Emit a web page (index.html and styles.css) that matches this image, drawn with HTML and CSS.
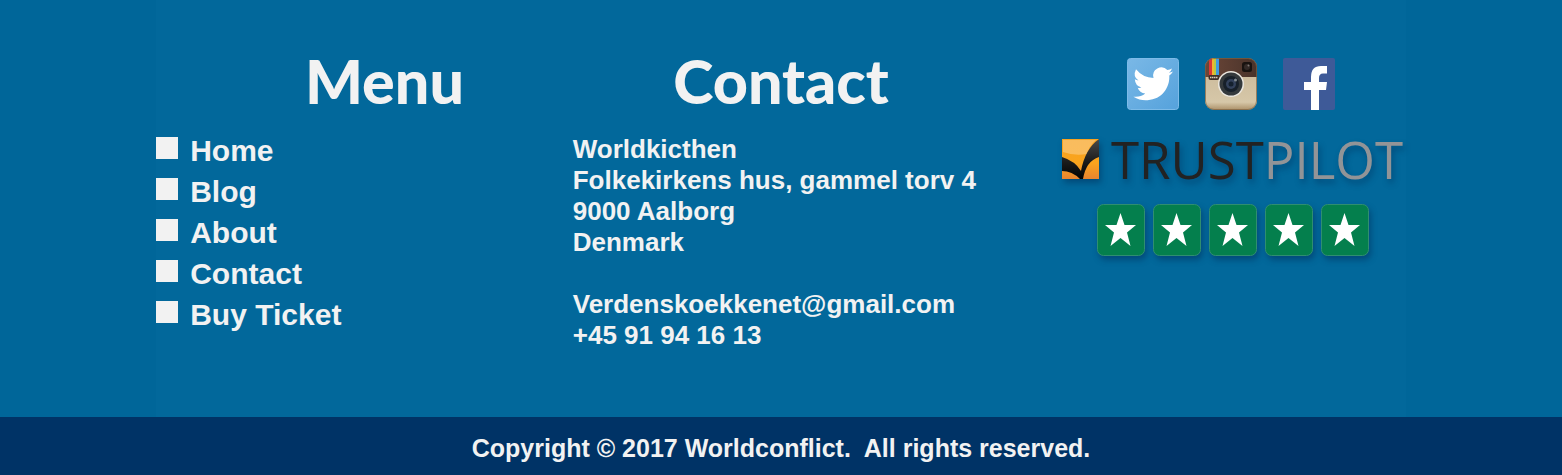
FILE: index.html
```html
<!DOCTYPE html>
<html lang="en">
<head>
<meta charset="utf-8">
<title>Worldconflict</title>
<link rel="stylesheet" href="styles.css">
</head>
<body>
<footer class="footer">
  <div class="columns">
    <nav class="menu">
      <h2 class="heading menu-heading">Menu</h2>
      <ul class="menu-list">
        <li><a href="#home">Home</a></li>
        <li><a href="#blog">Blog</a></li>
        <li><a href="#about">About</a></li>
        <li><a href="#contact">Contact</a></li>
        <li><a href="#ticket">Buy Ticket</a></li>
      </ul>
    </nav>
    <section class="contact">
      <h2 class="heading">Contact</h2>
      <address class="address">
        <p>Worldkicthen<br>Folkekirkens hus, gammel torv 4<br>9000 Aalborg<br>Denmark</p>
        <p><a href="mailto:Verdenskoekkenet@gmail.com">Verdenskoekkenet@gmail.com</a><br>+45 91 94 16 13</p>
      </address>
    </section>
    <section class="social">
      <div class="social-links">
        <a href="#twitter" aria-label="Twitter">
          <svg class="social-icon" viewBox="0 0 52 52">
            <defs><linearGradient id="sky" x1="0" y1="0" x2="1" y2="1"><stop offset="0" stop-color="#7ab8e6"/><stop offset="1" stop-color="#55a2dc"/></linearGradient></defs>
            <rect x=".5" y=".5" width="51" height="51" rx="3" fill="url(#sky)" stroke="#7dbbe8"/>
            <path fill="#fff" d="M46 13.600q-2 .9-4.100 1.200q2.300-1.700 3.100-4.400q-2.200 1.300-4.600 1.700A8.200 8.200 0 0 0 26.500 20Q15.800 19.600 9 11.200Q5.400 18.500 11.500 22.400q-2 0-3.700-1.100q.4 6.500 6.600 8.300q-1.800.5-3.700.1q1.800 5.200 7.600 5.800Q13.400 39.500 6.400 38.700Q13.300 42.900 20.700 42.200C35 41.500 43 29.500 42.300 17.600Q44.500 16.100 46 13.600z"/>
          </svg>
        </a>
        <a href="#instagram" aria-label="Instagram">
          <svg class="social-icon" viewBox="0 0 52 52">
            <defs>
              <clipPath id="camera"><rect width="52" height="52" rx="9"/></clipPath>
              <linearGradient id="leather" x1="0" y1="0" x2="1" y2="0"><stop offset="0" stop-color="#6b4638"/><stop offset="1" stop-color="#49332a"/></linearGradient>
              <linearGradient id="cream" x1="0" y1="0" x2="0" y2="1"><stop offset="0" stop-color="#c8b697"/><stop offset=".85" stop-color="#d6c7a8"/><stop offset="1" stop-color="#ab9068"/></linearGradient>
            </defs>
            <g clip-path="url(#camera)">
              <rect width="52" height="52" fill="url(#cream)"/>
              <rect width="52" height="19" fill="url(#leather)"/>
              <path fill="#d93935" d="M4 0h3v17H4z"/><path fill="#f1b42f" d="M7 0h2v17H7z"/><path fill="#bac93f" d="M9 0h2v17H9z"/><path fill="#3f9be0" d="M11 0h3v17h-3z"/>
              <rect x=".5" y=".5" width="51" height="51" rx="8.500" fill="none" stroke="#7d6140" opacity=".7"/>
            </g>
            <rect x="37" y="4" width="10" height="10" rx="2.500" fill="#191310"/><circle cx="42" cy="9" r="3" fill="#332a27"/><circle cx="43.500" cy="7.500" r="1" fill="#807671"/>
            <rect x="3.500" y="17" width="11" height="5" rx="2" fill="#3d2f29"/><path d="M5 19.500h8" stroke="#d8cdbb" stroke-width="1.500" stroke-dasharray="1.500 .5"/>
            <circle cx="26" cy="26" r="13" fill="#eae6de"/><circle cx="26" cy="26" r="11.500" fill="#34393c"/><circle cx="26" cy="26" r="8" fill="#17202a"/><circle cx="26" cy="26" r="5" fill="#33415b"/><circle cx="26" cy="26" r="2.500" fill="#14202e"/><circle cx="30.500" cy="22" r="1.500" fill="#7f8890"/>
          </svg>
        </a>
        <a href="#facebook" aria-label="Facebook">
          <svg class="social-icon" viewBox="0 0 52 52">
            <rect width="52" height="52" rx="2" fill="#3e5a98"/>
            <path fill="#fff" d="M28 52V32h-7v-8h7v-5q0-11 10-11h6v7.500h-4q-4 0-4 4.500v4h8l-1 8h-7v20z"/>
          </svg>
        </a>
      </div>
      <a class="trustpilot" href="#trustpilot" aria-label="Trustpilot">
        <svg class="trust-mark" viewBox="0 0 37 40">
          <defs>
            <linearGradient id="amber" x1="0" y1="0" x2="0" y2="1"><stop offset="0" stop-color="#f7a321"/><stop offset=".6" stop-color="#faa41d"/><stop offset="1" stop-color="#e88430"/></linearGradient>
            <linearGradient id="check" x1="0" y1="0" x2="0" y2="1"><stop offset="0" stop-color="#494a4a"/><stop offset=".6" stop-color="#191919"/><stop offset="1" stop-color="#030303"/></linearGradient>
          </defs>
          <rect width="37" height="40" fill="url(#amber)"/>
          <path fill="#fff" opacity=".28" d="M1 1h33Q27 7 25 15Q12 17 1 13z"/>
          <path fill="url(#check)" d="M0 18Q13 22 19 32Q23 10 37 0V18Q24 22 21 40H18Q10 32 0 32z"/>
        </svg>
        <span class="trust-word">TRUST<span class="trust-light">PILOT</span></span>
      </a>
      <svg class="stars" viewBox="0 0 272 52" role="img" aria-label="5 stars">
        <defs>
          <g id="star">
            <rect x=".5" y=".5" width="47" height="51" rx="6" fill="#047f4d" stroke="#2f8e70"/>
            <path fill="#fff" d="M23.500 9L27.500 21H39L30 28.500L33.500 42L23.500 34L13.500 42L17 28.500L8 21H19.500z"/>
          </g>
        </defs>
        <use href="#star"/><use href="#star" x="56"/><use href="#star" x="112"/><use href="#star" x="168"/><use href="#star" x="224"/>
      </svg>
    </section>
  </div>
  <p class="copyright">Copyright © 2017 Worldconflict.&nbsp; All rights reserved.</p>
</footer>
</body>
</html>
```
FILE: styles.css
```css
* {
  box-sizing: border-box;
}

body {
  margin: 0;
  font-family: "Liberation Sans", Arial, sans-serif;
  font-weight: bold;
  color: #f2f2f2;
  background: #003366;
}

a {
  color: inherit;
  text-decoration: none;
}

.footer {
  background: #006699;
}

.columns {
  display: grid;
  grid-template-columns: repeat(3, minmax(0, 1fr));
  width: 80%;
  margin: 0 auto;
  padding: 43px 0 66px;
  background: #02689b;
}

.heading {
  margin: 0 0 15px;
  font-family: Lato, sans-serif;
  font-size: 61px;
  font-weight: 900;
  line-height: 76px;
  text-align: center;
}

.menu-heading {
  padding-left: 40px;
  margin-bottom: 11px;
}

.menu-list {
  margin: 0;
  padding: 0;
  list-style: none;
  font-size: 30px;
  line-height: 41px;
}

.menu-list li {
  display: flex;
  gap: 12px;
}

.menu-list li::before {
  content: "";
  width: 22px;
  height: 22px;
  margin-top: 7px;
  background: #f2f2f2;
}

.address {
  font-size: 26px;
  font-style: normal;
  line-height: 31px;
  white-space: nowrap;
}

.address p {
  margin: 0 0 31px;
}

.address p:last-child {
  margin-bottom: 0;
}

.social {
  display: flex;
  flex-direction: column;
  align-items: center;
  padding: 15px 0 0 70px;
}

.social-links {
  display: flex;
  gap: 26px;
  padding-right: 3px;
}

.social-icon {
  display: block;
  width: 52px;
  height: 52px;
}

.trustpilot {
  display: flex;
  align-items: center;
  gap: 12px;
  margin: 20px 0 16px;
  filter: drop-shadow(2px 4px 3px rgba(0, 20, 60, 0.35));
}

.trust-mark {
  width: 37px;
  height: 40px;
}

.trust-word {
  font-family: "Open Sans", sans-serif;
  font-size: 51px;
  font-weight: 500;
  line-height: 58px;
  color: #222222;
}

.trust-light {
  color: #929497;
}

.stars {
  width: 272px;
  height: 52px;
  overflow: visible;
  filter: drop-shadow(2px 4px 3px rgba(0, 20, 60, 0.35));
}

.copyright {
  margin: 0;
  padding: 17px 0 12px;
  font-size: 25px;
  line-height: 29px;
  text-align: center;
  background: #003366;
}
```
